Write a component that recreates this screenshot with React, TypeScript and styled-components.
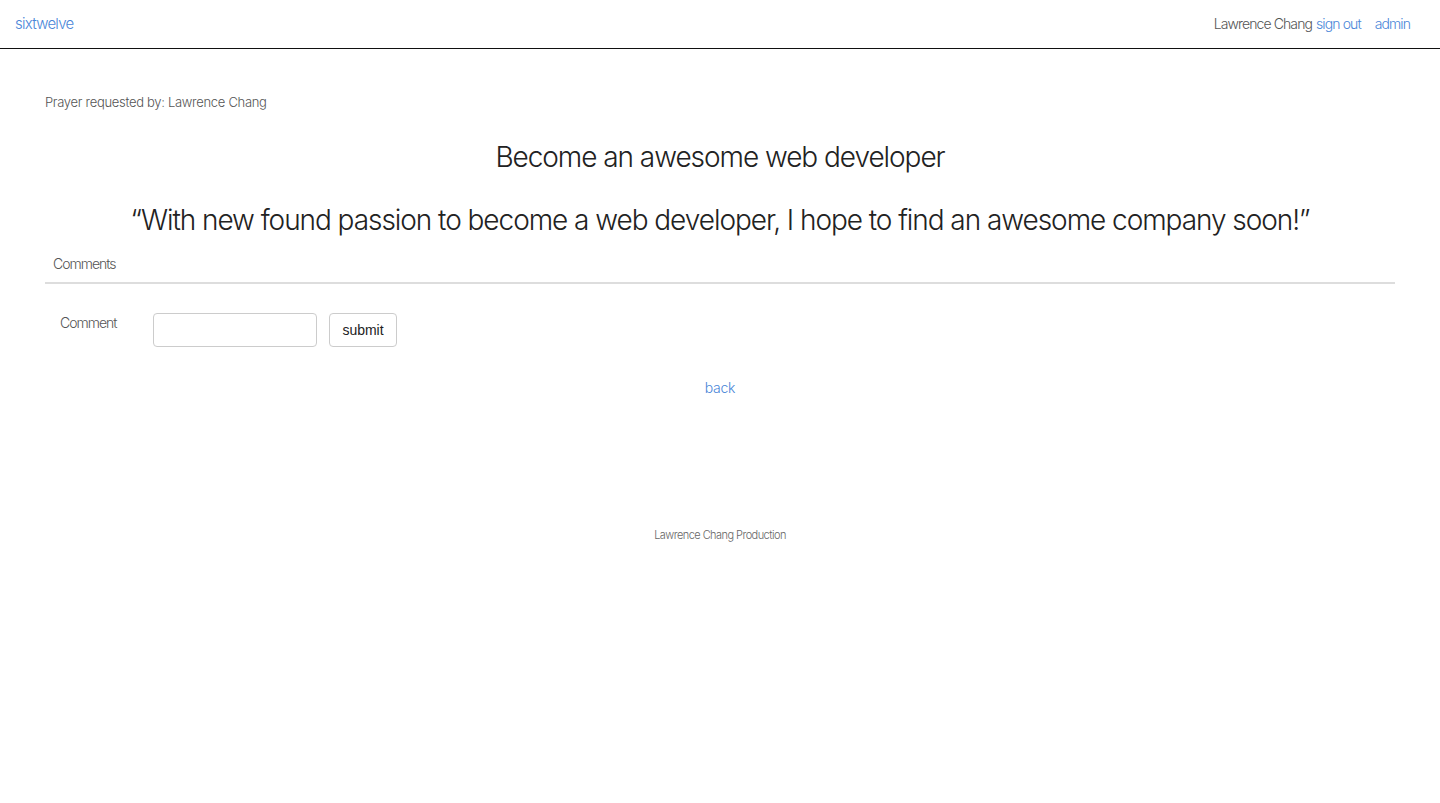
import React from 'react';
import styled, { createGlobalStyle } from 'styled-components';

const GlobalStyle = createGlobalStyle`
  html, body {
    margin: 0;
    padding: 0;
    background: #fff;
  }
  body {
    font-family: "Helvetica Neue", Inter, "Liberation Sans", Arial, sans-serif;
    font-weight: 300;
    color: #333;
  }
  * {
    box-sizing: border-box;
  }
`;

// Navbar
const NavBar = styled.nav`
  height: 49px;
  border-bottom: 1px solid #111;
  display: flex;
  align-items: center;
  justify-content: space-between;
  padding: 0 30px 2px 15px;
`;

const Brand = styled.a`
  font-size: 15px;
  color: #4a86d8;
  letter-spacing: -0.75px;
  text-decoration: none;
`;

const NavRight = styled.div`
  display: flex;
  align-items: center;
  font-size: 14px;
  letter-spacing: -0.9px;
`;

const UserName = styled.span`
  color: #555;
`;

const NavLink = styled.a<{ $gap?: number }>`
  color: #4a86d8;
  text-decoration: none;
  margin-left: ${(p) => p.$gap ?? 4}px;
`;

// Page
const Page = styled.main`
  padding: 45px 45px 0;
`;

const RequestedBy = styled.p`
  margin: 0;
  font-size: 13px;
  color: #555;
  letter-spacing: -0.3px;
`;

const Heading = styled.h2<{ $top: number }>`
  margin: ${(p) => p.$top}px 0 0;
  text-align: center;
  font-size: 28px;
  font-weight: 300;
  color: #222;
  letter-spacing: -1.05px;
`;

const TabBar = styled.div`
  margin-top: 8px;
  border-bottom: 2px solid #ddd;
  padding: 8px 8px 9px;
`;

const Tab = styled.span`
  font-size: 14px;
  color: #555;
  letter-spacing: -1px;
`;

const CommentForm = styled.form`
  display: flex;
  align-items: flex-start;
  padding: 29px 0 0 15px;
`;

const Label = styled.label`
  width: 93px;
  font-size: 14px;
  color: #555;
  letter-spacing: -1px;
  padding-top: 1px;
`;

const Input = styled.input`
  width: 164px;
  height: 34px;
  border: 1px solid #ccc;
  border-radius: 4px;
  padding: 6px 10px;
  font-size: 14px;
  outline: none;
`;

const Button = styled.button`
  margin-left: 12px;
  height: 34px;
  width: 68px;
  border: 1px solid #ccc;
  border-radius: 4px;
  background: #fff;
  font-family: "Liberation Sans", Arial, sans-serif;
  font-weight: 400;
  font-size: 14px;
  color: #222;
`;

const Back = styled.a`
  display: block;
  margin-top: 32px;
  text-align: center;
  font-size: 14px;
  color: #4a86d8;
  text-decoration: none;
  letter-spacing: -0.3px;
`;

const Footer = styled.footer`
  margin-top: 132px;
  text-align: center;
  font-size: 11px;
  color: #666;
  letter-spacing: -0.55px;
`;

const App = () => {
  return (
    <>
      <GlobalStyle />
      <NavBar>
        <Brand href="#">sixtwelve</Brand>
        <NavRight>
          <UserName>Lawrence Chang</UserName>
          <NavLink href="#">sign out</NavLink>
          <NavLink href="#" $gap={14}>
            admin
          </NavLink>
        </NavRight>
      </NavBar>
      <Page>
        <RequestedBy>Prayer requested by: Lawrence Chang</RequestedBy>
        <Heading $top={30}>Become an awesome web developer</Heading>
        <Heading $top={29}>
          “With new found passion to become a web developer, I hope to find an awesome company soon!”
        </Heading>
        <TabBar>
          <Tab>Comments</Tab>
        </TabBar>
        <CommentForm onSubmit={(e) => e.preventDefault()}>
          <Label>Comment</Label>
          <Input type="text" />
          <Button type="submit">submit</Button>
        </CommentForm>
        <Back href="#">back</Back>
        <Footer>Lawrence Chang Production</Footer>
      </Page>
    </>
  );
};

export default App;
